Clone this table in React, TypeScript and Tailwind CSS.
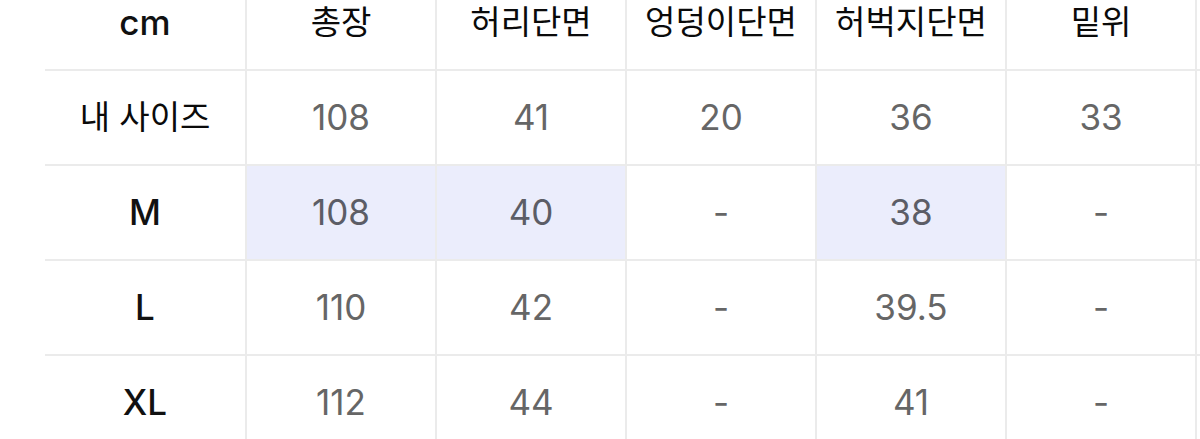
import React from "react";

const headers = ["cm", "총장", "허리단면", "엉덩이단면", "허벅지단면", "밑위"];
const rows: { label: string; values: string[]; hl: number[] }[] = [
  { label: "내 사이즈", values: ["108", "41", "20", "36", "33"], hl: [] },
  { label: "M", values: ["108", "40", "-", "38", "-"], hl: [0, 1, 3] },
  { label: "L", values: ["110", "42", "-", "39.5", "-"], hl: [] },
  { label: "XL", values: ["112", "44", "-", "41", "-"], hl: [] },
];

const isLatin = (s: string) => /^[A-Za-z]+$/.test(s);

export default function App() {
  return (
    <div
      className="w-[1200px] h-[439px] overflow-hidden bg-white"
      style={{ fontFamily: 'Inter, "Noto Sans CJK KR", sans-serif' }}
    >
      <div className="-mt-[24px] ml-[45px] grid grid-cols-[202px_190px_190px_190px_190px_190px_190px] w-[1342px]">
        {headers.map((h) => (
          <div
            key={h}
            className={
              isLatin(h)
                ? "h-[95px] flex items-center justify-center border-r-2 border-b-2 border-[#ebebeb] text-[35px] font-medium text-[#111111]"
                : "h-[95px] flex items-center justify-center border-r-2 border-b-2 border-[#ebebeb] text-[33px] font-normal text-[#0a0a0a]"
            }
          >
            {h}
          </div>
        ))}
        <div className="h-[95px] border-b-2 border-[#ebebeb]" />
        {rows.map((r) => (
          <React.Fragment key={r.label}>
            <div
              className={
                isLatin(r.label)
                  ? "h-[95px] flex items-center justify-center border-r-2 border-b-2 border-[#ebebeb] text-[35px] font-medium text-[#111111]"
                  : "h-[95px] flex items-center justify-center border-r-2 border-b-2 border-[#ebebeb] text-[33px] font-normal text-[#0a0a0a]"
              }
            >
              {r.label}
            </div>
            {r.values.map((v, i) => (
              <div
                key={i}
                className={
                  r.hl.includes(i)
                    ? "h-[95px] flex items-center justify-center border-r-2 border-b-2 border-[#ebebeb] bg-[#ebedfc] text-[35px] text-[#5c5d66]"
                    : "h-[95px] flex items-center justify-center border-r-2 border-b-2 border-[#ebebeb] text-[35px] text-[#666666]"
                }
              >
                {v}
              </div>
            ))}
            <div className="h-[95px] border-b-2 border-[#ebebeb]" />
          </React.Fragment>
        ))}
      </div>
    </div>
  );
}
